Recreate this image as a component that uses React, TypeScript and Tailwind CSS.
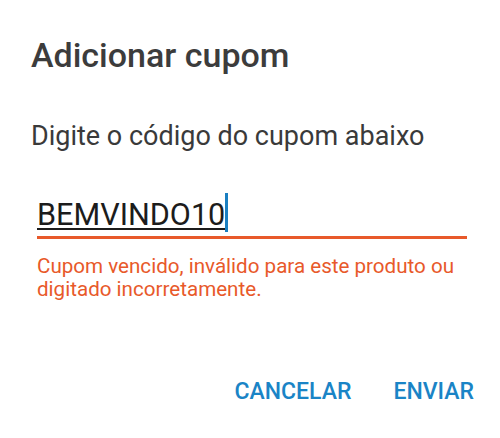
import React from "react";

export default function App() {
  return (
    <div className="w-[500px] h-[438px] bg-white overflow-hidden flex flex-col" style={{ fontFamily: "Roboto, 'Noto Sans', sans-serif" }}>
      <h1 className="pl-[31px] pt-[35px] text-[34px] leading-[40px] font-medium text-[#3c3c3c]">Adicionar cupom</h1>
      <p className="pl-[31px] mt-[45px] text-[27px] leading-[32px] text-[#3a3a3a]">Digite o código do cupom abaixo</p>
      <div className="pl-[37px] pr-[33px] mt-[41px] flex flex-col">
        <div className="flex items-start">
          <span className="mt-[4px] text-[30.6px] leading-[36px] text-[#1c1c1c] underline decoration-[2px] underline-offset-[3px]">BEMVINDO10</span>
          <span className="w-[3px] h-[39px] bg-[#1a7fc1]" />
        </div>
        <div className="mt-[3px] h-[3px] bg-[#e8592a]" />
        <p className="mt-[16px] text-[20.6px] leading-[23px] text-[#e8592a]">
          Cupom vencido, inválido para este produto ou<br />digitado incorretamente.
        </p>
      </div>
      <div className="mt-[77px] pr-[26px] flex justify-end gap-[42px] text-[23px] leading-[28px] font-medium text-[#1a84c6]">
        <span>CANCELAR</span>
        <span>ENVIAR</span>
      </div>
    </div>
  );
}
